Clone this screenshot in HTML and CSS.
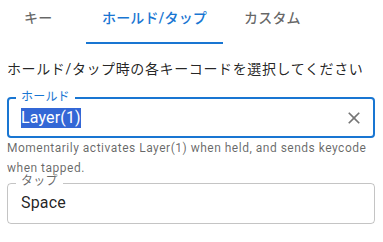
FILE: index.html
```html
<!DOCTYPE html>
<html lang="ja">
<head>
<meta charset="utf-8">
<link rel="stylesheet" href="styles.css">
</head>
<body>
<div class="tabs">
  <div class="tab tab-key">キー</div>
  <div class="tab tab-hold active">ホールド/タップ</div>
  <div class="tab tab-custom">カスタム</div>
</div>
<p class="intro">ホールド/タップ時の各キーコードを選択してください</p>
<div class="group">
  <div class="field focused">
    <span class="label">ホールド</span>
    <span class="value"><span class="selected">Layer(1)</span></span>
    <svg class="clear" viewBox="0 0 24 24" width="20" height="20"><path d="M19 6.41 17.59 5 12 10.59 6.41 5 5 6.41 10.59 12 5 17.59 6.41 19 12 13.41 17.59 19 19 17.59 13.41 12z"/></svg>
  </div>
  <p class="helper">Momentarily activates Layer(1) when held, and sends keycode when tapped.</p>
  <div class="field">
    <span class="label">タップ</span>
    <span class="value">Space</span>
  </div>
</div>
</body>
</html>
```
FILE: styles.css
```css
html, body {
  margin: 0;
  padding: 0;
  background: #fff;
}
body {
  font-family: Roboto, "Noto Sans CJK JP", sans-serif;
  color: rgba(0, 0, 0, 0.87);
}
.tabs {
  display: flex;
  height: 44px;
}
.tab {
  box-sizing: border-box;
  height: 44px;
  padding-top: 8px;
  font-size: 14px;
  font-weight: 500;
  line-height: 20px;
  letter-spacing: 0.2px;
  color: rgba(0, 0, 0, 0.6);
  white-space: nowrap;
}
.tab-key {
  width: 86px;
  padding-left: 24px;
}
.tab-hold {
  width: 137px;
  text-align: center;
}
.tab-custom {
  padding-left: 21px;
}
.tab.active {
  color: #1976d2;
  border-bottom: 2px solid #1976d2;
}
.intro {
  margin: 15px 7px 0;
  font-size: 14px;
  line-height: 20px;
  letter-spacing: 0.62px;
  white-space: nowrap;
}
.group {
  margin: 18px 8px 0 7px;
}
.field {
  position: relative;
  box-sizing: border-box;
  height: 41px;
  border: 1px solid rgba(0, 0, 0, 0.23);
  border-radius: 4px;
  display: flex;
  align-items: center;
  padding: 0 9px 0 13px;
}
.field.focused {
  border: 2px solid #1976d2;
  padding-left: 12px;
}
.label {
  position: absolute;
  top: -8.5px;
  left: 8px;
  padding: 0 5px;
  background: #fff;
  font-size: 12px;
  line-height: 12px;
  color: rgba(0, 0, 0, 0.6);
  letter-spacing: 0.2px;
}
.focused .label {
  left: 7px;
  color: #1976d2;
}
.value {
  flex: 1;
  font-size: 16px;
  line-height: 20px;
  letter-spacing: 0.15px;
}
.selected {
  display: inline-block;
  line-height: 20px;
  background: #3367d6;
  color: #fff;
}
.clear {
  display: block;
  fill: rgba(0, 0, 0, 0.54);
}
.helper {
  margin: 1px 0 0;
  font-size: 12px;
  line-height: 1.66;
  letter-spacing: 0.5px;
  color: rgba(0, 0, 0, 0.6);
}
.helper + .field {
  margin-top: 4px;
}
```
